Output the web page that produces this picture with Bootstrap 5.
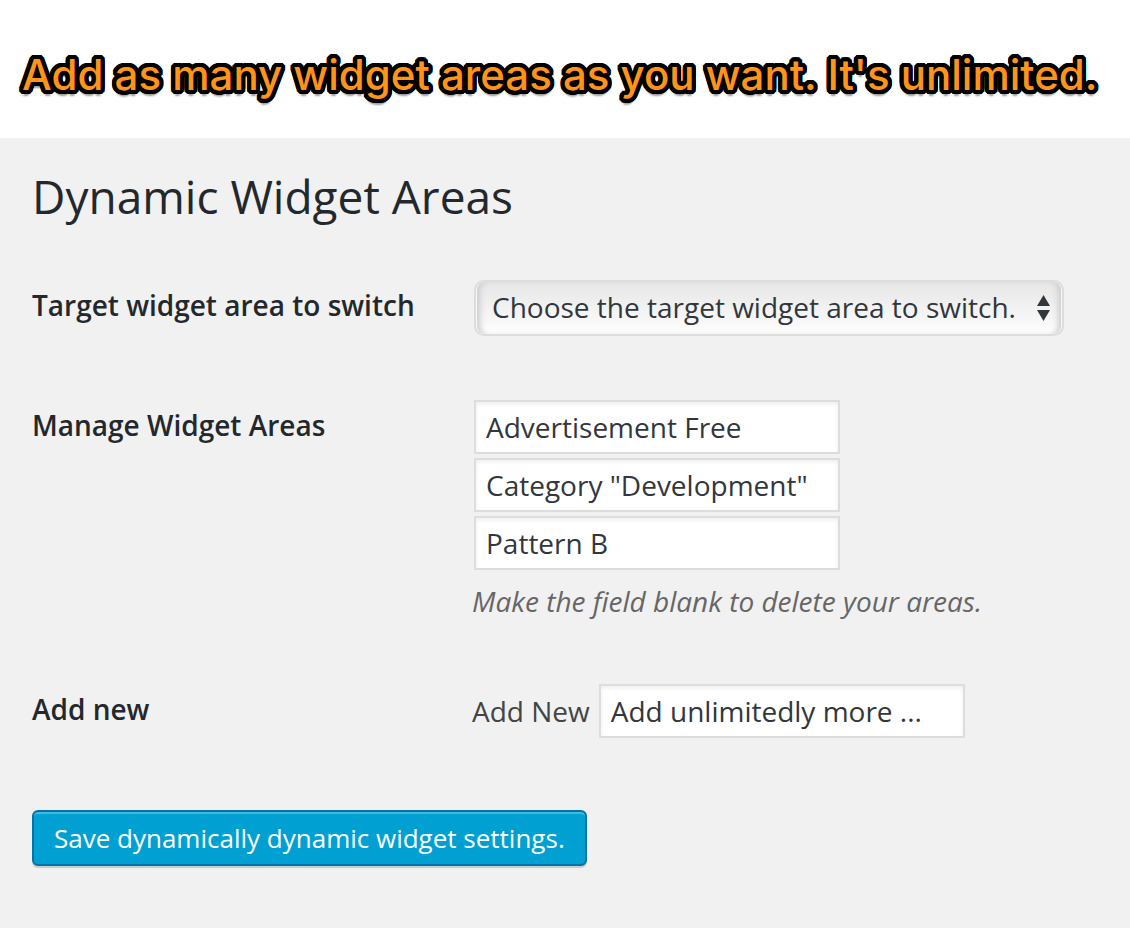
<!DOCTYPE html>
<html lang="en">
<head>
<meta charset="utf-8">
<meta name="viewport" content="width=device-width, initial-scale=1">
<title>Dynamic Widget Areas</title>
<link href="https://cdn.jsdelivr.net/npm/bootstrap@5.3.0/dist/css/bootstrap.min.css" rel="stylesheet">
<style>
body {
  font-family: "Open Sans", sans-serif;
  font-size: 28px;
  line-height: 36px;
  color: #444;
  background: #f1f1f1;
}
.banner { padding: 51px 22px 39px; }
.banner p {
  font-family: Inter, "Liberation Sans", sans-serif;
  font-weight: 500;
  font-size: 42px;
  line-height: 48px;
  color: #ff9419;
  text-shadow:
    4px 0 #000, 4px 1px #000, 4px 2px #000, 3px 3px #000, 2px 4px #000, 1px 4px #000,
    0 4px #000, -1px 4px #000, -2px 4px #000, -3px 3px #000, -4px 2px #000, -4px 1px #000,
    -4px 0 #000, -4px -1px #000, -4px -2px #000, -3px -3px #000, -2px -4px #000, -1px -4px #000,
    0 -4px #000, 1px -4px #000, 2px -4px #000, 3px -3px #000, 4px -2px #000, 4px -1px #000,
    2px 0 #000, -2px 0 #000, 0 2px #000, 0 -2px #000,
    0 6px 2px rgba(0, 0, 0, .4);
}
.settings { padding: 26px 32px 60px; }
.settings h1 { font-size: 46px; line-height: 64px; font-weight: 400; color: #23282d; margin: 0 0 50px; }
.setting { margin-bottom: 60px; }
.setting-name { flex: 0 1 440px; padding-top: 9px; font-weight: 600; color: #23282d; }
.setting-last { margin-bottom: 70px; }
.wp-select, .wp-input {
  display: block;
  margin: 2px;
  max-width: 100%;
  font-size: 28px;
  line-height: 36px;
  color: #32373c;
  border: 2px solid #ddd;
}
.wp-select {
  width: 590px;
  height: 56px;
  padding: 0 44px 2px 16px;
  border-radius: 10px;
  appearance: none;
  background: linear-gradient(#e6e6e6, #fefefe);
  box-shadow: inset 1px 0 0 #f8f8f8, inset -1px 0 0 #f8f8f8, inset 8px 0 6px -4px #ccc, inset -8px 0 6px -4px #ccc;
}
.select-arrows { right: 16px; top: 17px; pointer-events: none; }
.wp-input {
  width: 366px;
  height: 54px;
  padding: 0 10px;
  background: #fff;
  border-radius: 0;
  box-shadow: inset 0 2px 4px rgba(0, 0, 0, .07);
}
.wp-input::placeholder { color: #32373c; opacity: 1; }
.area-list .wp-input { margin-bottom: 4px; }
.note { margin: 13px 0 3px; color: #666; font-style: italic; }
.new-area { gap: 7px; }
.btn-save {
  padding: 8px 20px;
  font-size: 26px;
  line-height: 36px;
  color: #fff;
  background: #00a0d2;
  border: 2px solid #0073aa;
  border-radius: 6px;
  box-shadow: inset 0 2px 0 #42b8de, 0 2px 0 #ccc;
}
</style>
</head>
<body>
<header class="banner bg-white">
  <p class="m-0">Add as many widget areas as you want. It's unlimited.</p>
</header>
<main class="settings">
  <h1>Dynamic Widget Areas</h1>
  <form>
    <div class="setting d-flex align-items-start">
      <label class="setting-name" for="target">Target widget area to switch</label>
      <div class="position-relative">
        <select id="target" class="wp-select">
          <option>Choose the target widget area to switch.</option>
        </select>
        <svg class="select-arrows position-absolute" width="13" height="26" viewBox="0 0 13 26" fill="#32373c" aria-hidden="true">
          <path d="M6.500 0 13 11H0zM0 15h13L6.500 26z"/>
        </svg>
      </div>
    </div>
    <div class="setting d-flex align-items-start">
      <label class="setting-name" for="area1">Manage Widget Areas</label>
      <div class="area-list">
        <input type="text" class="wp-input" id="area1" value="Advertisement Free">
        <input type="text" class="wp-input" aria-label="Widget area 2" value="Category &quot;Development&quot;">
        <input type="text" class="wp-input" aria-label="Widget area 3" value="Pattern B">
        <p class="note">Make the field blank to delete your areas.</p>
      </div>
    </div>
    <div class="setting setting-last d-flex align-items-start">
      <span class="setting-name">Add new</span>
      <div class="new-area d-flex align-items-center">
        <label for="new-area">Add New</label>
        <input type="text" class="wp-input" id="new-area" placeholder="Add unlimitedly more ...">
      </div>
    </div>
    <button type="button" class="btn-save">Save dynamically dynamic widget settings.</button>
  </form>
</main>
<script src="https://cdn.jsdelivr.net/npm/bootstrap@5.3.0/dist/js/bootstrap.bundle.min.js"></script>
</body>
</html>
